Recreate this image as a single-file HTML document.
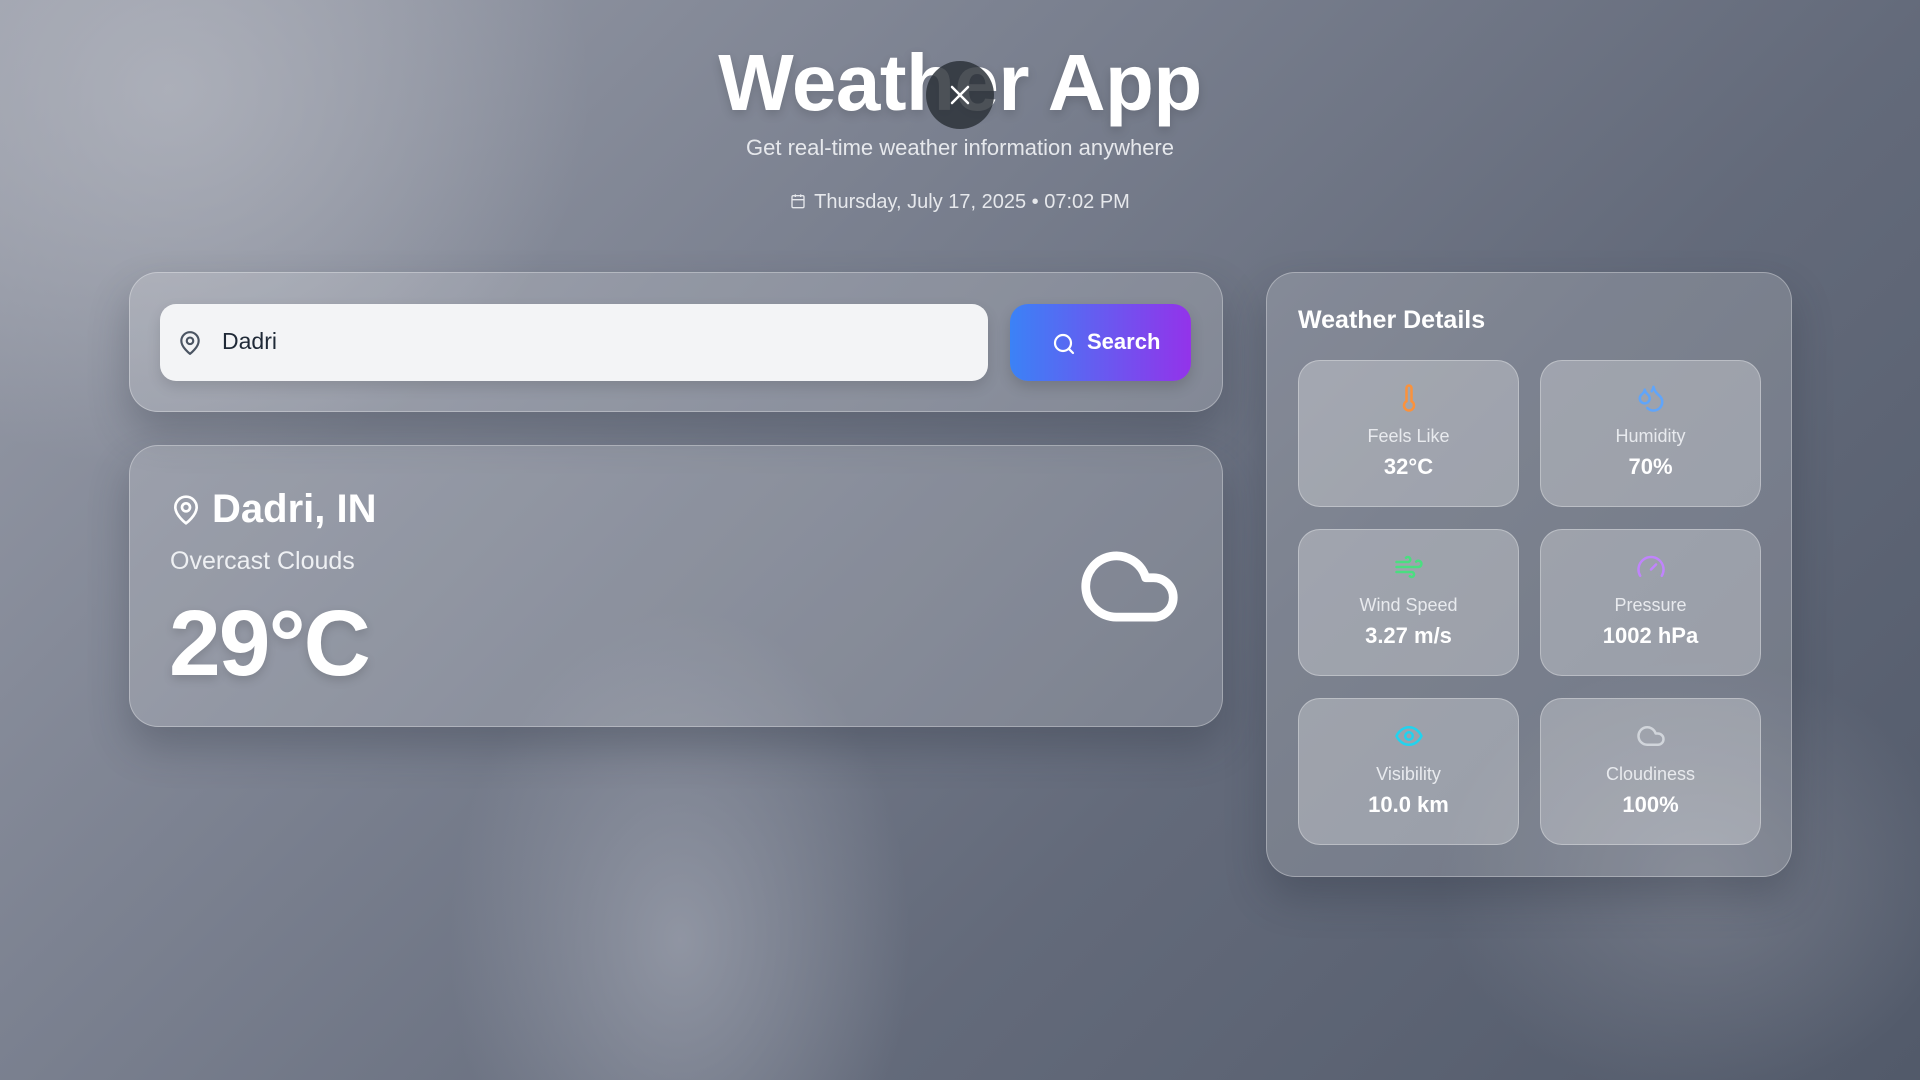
<!DOCTYPE html>
<html><head><meta charset="utf-8"><style>
*{box-sizing:border-box;margin:0;padding:0}
body{width:1920px;height:1080px;overflow:hidden;position:relative;font-family:"Liberation Sans",sans-serif;color:#fff;
background:
radial-gradient(ellipse 230px 330px at 680px 940px,rgba(150,155,168,.85),rgba(150,155,168,0) 100%),
radial-gradient(ellipse 260px 220px at 1700px 880px,rgba(130,135,148,.6),rgba(130,135,148,0) 100%),
radial-gradient(ellipse 420px 380px at 170px 90px,rgba(180,183,192,.75),rgba(180,183,192,0) 100%),
linear-gradient(135deg,#9a9eaa 0%,#7b8190 35%,#636a7a 65%,#525a6a 100%);}
.abs{position:absolute}
.card{position:absolute;background:rgba(255,255,255,.16);border:1.5px solid rgba(255,255,255,.3);border-radius:29px;box-shadow:0 20px 40px rgba(40,45,60,.3)}
h1{position:absolute;left:0;width:1920px;top:37px;text-align:center;font-size:80px;font-weight:bold;letter-spacing:-0.5px;text-shadow:0 4px 10px rgba(0,0,0,.15)}
.sub{position:absolute;left:0;width:1920px;top:135px;text-align:center;font-size:22px;color:#e6e8ec}
.date{position:absolute;left:0;width:1920px;top:191px;text-align:center;font-size:20px;color:#e6e8ec}
.tile{position:absolute;width:221px;height:147px;background:rgba(255,255,255,.27);border:1.5px solid rgba(255,255,255,.3);border-radius:22px;text-align:center}
.tile svg{position:absolute;left:95px;top:22px}
.tile .l{position:absolute;top:65px;width:100%;font-size:18px;color:#e8eaee}
.tile .v{position:absolute;top:93px;width:100%;font-size:22px;font-weight:bold}
</style></head><body>
<h1>Weather App</h1>
<div class="abs" style="left:926px;top:61px;width:68px;height:68px;border-radius:50%;background:rgba(45,50,58,.85)">
<svg width="68" height="68" viewBox="0 0 68 68"><path d="M26 26L42 42M42 26L26 42" stroke="#fff" stroke-width="2.5" stroke-linecap="round"/></svg></div>
<div class="sub">Get real-time weather information anywhere</div>
<div class="date"><svg width="16" height="16" viewBox="0 0 24 24" style="vertical-align:-1px;margin-right:8px" fill="none" stroke="#e6e8ec" stroke-width="2"><rect x="3" y="4" width="18" height="18" rx="2"/><path d="M16 2v4M8 2v4M3 10h18"/></svg>Thursday, July 17, 2025 • 07:02 PM</div>

<div class="card" style="left:129px;top:272px;width:1094px;height:140px"></div>
<div class="abs" style="left:160px;top:304px;width:828px;height:77px;background:#f3f4f6;border-radius:16px;box-shadow:0 6px 14px rgba(0,0,0,.12)">
<svg class="abs" style="left:17px;top:26px" width="26" height="26" viewBox="0 0 24 24" fill="none" stroke="#4b5563" stroke-width="2" stroke-linecap="round" stroke-linejoin="round"><path d="M20 10c0 6-8 12-8 12s-8-6-8-12a8 8 0 0 1 16 0Z"/><circle cx="12" cy="10" r="3"/></svg>
<div class="abs" style="left:62px;top:24px;font-size:23px;color:#1f2937">Dadri</div></div>
<div class="abs" style="left:1010px;top:304px;width:181px;height:77px;border-radius:18px;background:linear-gradient(90deg,#3b82f6,#9333ea);box-shadow:0 6px 14px rgba(0,0,0,.15)">
<svg class="abs" style="left:42px;top:28px" width="24" height="24" viewBox="0 0 24 24" fill="none" stroke="#fff" stroke-width="2.2" stroke-linecap="round"><circle cx="11" cy="11" r="8"/><path d="m21 21-4.3-4.3"/></svg>
<div class="abs" style="left:77px;top:25px;font-size:22px;font-weight:bold">Search</div></div>

<div class="card" style="left:129px;top:445px;width:1094px;height:282px"></div>
<svg class="abs" style="left:170px;top:494px" width="32" height="32" viewBox="0 0 24 24" fill="none" stroke="#fff" stroke-width="2" stroke-linecap="round" stroke-linejoin="round"><path d="M20 10c0 6-8 12-8 12s-8-6-8-12a8 8 0 0 1 16 0Z"/><circle cx="12" cy="10" r="3"/></svg>
<div class="abs" style="left:212px;top:487px;font-size:40px;font-weight:bold">Dadri, IN</div>
<div class="abs" style="left:170px;top:547px;font-size:25px;color:#eef0f3">Overcast Clouds</div>
<div class="abs" style="left:169px;top:590px;font-size:93px;font-weight:bold;letter-spacing:-2px;text-shadow:0 4px 10px rgba(0,0,0,.15)">29°C</div>
<svg class="abs" style="left:1077px;top:534px" width="105" height="105" viewBox="0 0 24 24" fill="none" stroke="#fff" stroke-width="2" stroke-linecap="round" stroke-linejoin="round"><path d="M17.5 19H9a7 7 0 1 1 6.71-9h1.79a4.5 4.5 0 1 1 0 9Z"/></svg>

<div class="card" style="left:1266px;top:272px;width:526px;height:605px"></div>
<div class="abs" style="left:1298px;top:306px;font-size:25px;font-weight:bold">Weather Details</div>

<div class="tile" style="left:1298px;top:360px"><svg width="30" height="30" viewBox="0 0 24 24" fill="none" stroke="#fb923c" stroke-width="2" stroke-linecap="round"><path d="M14 4v10.54a4 4 0 1 1-4 0V4a2 2 0 0 1 4 0Z"/></svg><div class="l">Feels Like</div><div class="v">32°C</div></div>
<div class="tile" style="left:1540px;top:360px"><svg width="30" height="30" viewBox="0 0 24 24" fill="none" stroke="#60a5fa" stroke-width="2" stroke-linecap="round" stroke-linejoin="round"><path d="M7 16.3c2.2 0 4-1.83 4-4.05 0-1.16-.57-2.26-1.71-3.19S7.29 6.75 7 5.3c-.29 1.45-1.14 2.84-2.29 3.76S3 11.1 3 12.25c0 2.22 1.8 4.05 4 4.05z"/><path d="M12.56 6.6A10.97 10.97 0 0 0 14 3.02c.5 2.5 2 4.9 4 6.5s3 3.5 3 5.5a6.98 6.98 0 0 1-11.91 4.97"/></svg><div class="l">Humidity</div><div class="v">70%</div></div>
<div class="tile" style="left:1298px;top:529px"><svg width="30" height="30" viewBox="0 0 24 24" fill="none" stroke="#4ade80" stroke-width="2" stroke-linecap="round" stroke-linejoin="round"><path d="M17.7 7.7a2.5 2.5 0 1 1 1.8 4.3H2"/><path d="M9.6 4.6A2 2 0 1 1 11 8H2"/><path d="M12.6 19.4A2 2 0 1 0 14 16H2"/></svg><div class="l">Wind Speed</div><div class="v">3.27 m/s</div></div>
<div class="tile" style="left:1540px;top:529px"><svg width="30" height="30" viewBox="0 0 24 24" fill="none" stroke="#c084fc" stroke-width="2" stroke-linecap="round" stroke-linejoin="round"><path d="m12 14 4-4"/><path d="M3.34 19a10 10 0 1 1 17.32 0"/></svg><div class="l">Pressure</div><div class="v">1002 hPa</div></div>
<div class="tile" style="left:1298px;top:698px"><svg width="30" height="30" viewBox="0 0 24 24" fill="none" stroke="#22d3ee" stroke-width="2" stroke-linecap="round" stroke-linejoin="round"><path d="M2 12s3-7 10-7 10 7 10 7-3 7-10 7-10-7-10-7Z"/><circle cx="12" cy="12" r="3"/></svg><div class="l">Visibility</div><div class="v">10.0 km</div></div>
<div class="tile" style="left:1540px;top:698px"><svg width="30" height="30" viewBox="0 0 24 24" fill="none" stroke="#d1d5db" stroke-width="2" stroke-linecap="round" stroke-linejoin="round"><path d="M17.5 19H9a7 7 0 1 1 6.71-9h1.79a4.5 4.5 0 1 1 0 9Z"/></svg><div class="l">Cloudiness</div><div class="v">100%</div></div>
</body></html>
